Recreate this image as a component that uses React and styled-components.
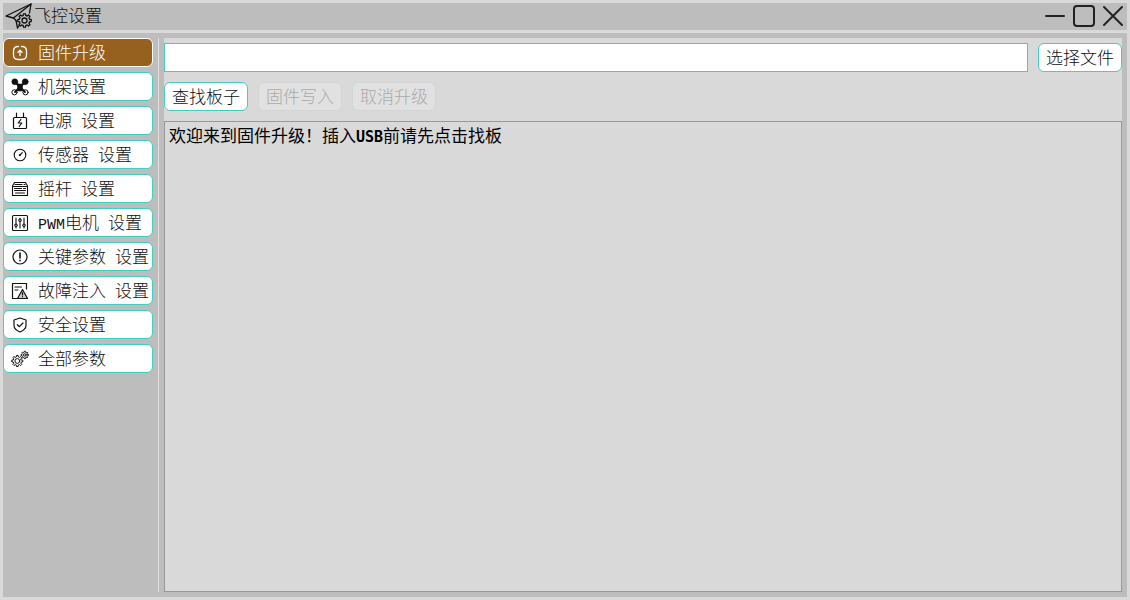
import { useState } from "react";
import styled, { createGlobalStyle, css } from "styled-components";

const stroke = {
  fill: "none",
  stroke: "currentColor",
  strokeLinecap: "round",
  strokeLinejoin: "round",
};

// outline of a toothed wheel around (cx, cy)
const gearPath = (cx, cy, outer, inner, teeth = 8) => {
  const points = [];
  const step = (Math.PI * 2) / teeth;
  for (let i = 0; i < teeth; i++) {
    const a = i * step;
    [
      [inner, -0.3],
      [outer, -0.19],
      [outer, 0.19],
      [inner, 0.3],
    ].forEach(([r, k]) => {
      const x = cx + r * Math.cos(a + k * step);
      const y = cy + r * Math.sin(a + k * step);
      points.push(`${x.toFixed(2)} ${y.toFixed(2)}`);
    });
  }
  return `M${points.join("L")}Z`;
};

const LogoIcon = () => (
  <svg width="28" height="26" viewBox="0 0 28 26" {...stroke} strokeWidth="1.3">
    <path d="M11 17.5L8.5 15L1 13L26 1L24.5 10" />
    <path d="M26 1L8.5 15M11 17.5L12.5 25L14.5 22" />
    <path d={gearPath(19.5, 17.5, 6.8, 5.2)} />
    <circle cx="19.5" cy="17.5" r="2.5" />
  </svg>
);

const UpgradeIcon = () => (
  <svg width="18" height="18" viewBox="0 0 18 18" {...stroke} strokeWidth="1.3">
    <path d="M7.5 2.5H7Q2.5 2.5 2.5 7V11Q2.5 15.5 7 15.5H11Q15.5 15.5 15.5 11V7Q15.5 2.5 11 2.5H10.5" />
    <path d="M9 11.5V6.5M7 8.3L9 6.3L11 8.3" />
  </svg>
);

const DroneIcon = () => (
  <svg width="18" height="18" viewBox="0 0 18 18" {...stroke} strokeWidth="1.8">
    <path d="M4 4L14 14M14 4L4 14" />
    <circle cx="3.8" cy="3.8" r="3" fill="currentColor" strokeWidth="0.5" />
    <circle cx="14.2" cy="3.8" r="3" fill="currentColor" strokeWidth="0.5" />
    <circle cx="3.5" cy="14.3" r="2.6" strokeWidth="1" />
    <circle cx="14.5" cy="14.3" r="2.6" strokeWidth="1" />
    <rect x="6.5" y="6" width="5" height="7" rx="1" fill="currentColor" strokeWidth="0.5" />
  </svg>
);

const PowerIcon = () => (
  <svg width="18" height="18" viewBox="0 0 18 18" {...stroke} strokeWidth="1.2">
    <rect x="2.5" y="5.5" width="13" height="11" rx="1" />
    <path d="M5.5 5V1M12.5 5V1M9.8 7.5L7.2 11H10.8L8.2 14.5" />
  </svg>
);

const SensorIcon = () => (
  <svg width="18" height="18" viewBox="0 0 18 18" {...stroke} strokeWidth="1.1">
    <circle cx="9" cy="9" r="5.8" />
    <circle cx="8.9" cy="9.1" r="0.6" />
    <path d="M9.5 8.5L11.3 6.7" />
  </svg>
);

const StickIcon = () => (
  <svg width="18" height="18" viewBox="0 0 18 18" {...stroke} strokeWidth="1.1">
    <path d="M3.5 2.5H14.5L16.5 6V15.5H1.5V6ZM1.5 6.5H16.5M4 4.5H11M13 4.5H14" />
    <path d="M3.5 8.5H10.5M12.5 8.5H14.5M3.5 10.5H14.5M4.5 13H13.5" />
  </svg>
);

const MotorIcon = () => (
  <svg width="18" height="18" viewBox="0 0 18 18" {...stroke} strokeWidth="1.1">
    <rect x="1.5" y="1.5" width="15" height="15" rx="1" />
    <path d="M5 4V10M5 12.5V14M9 4V5M9 7.5V14M13 4V10M13 12.5V14" />
    <circle cx="5" cy="11.2" r="1.2" />
    <circle cx="9" cy="6.2" r="1.2" />
    <circle cx="13" cy="11.2" r="1.2" />
  </svg>
);

const KeyParamIcon = () => (
  <svg width="18" height="18" viewBox="0 0 18 18" {...stroke} strokeWidth="1.2">
    <circle cx="9" cy="9" r="7" />
    <path d="M9 5V10M9 12.4V12.8" strokeWidth="1.6" />
  </svg>
);

const FaultIcon = () => (
  <svg width="18" height="18" viewBox="0 0 18 18" {...stroke} strokeWidth="1.2">
    <path d="M6 16.5H1.5V1.5H15.5V7M4 5H10.5M4 8H7" />
    <path d="M11.5 7.5L16.5 16.5H6.5ZM11.5 10.5V13M11.5 14.7V14.8" fill="#ccc" />
  </svg>
);

const SafetyIcon = () => (
  <svg width="18" height="18" viewBox="0 0 18 18" {...stroke} strokeWidth="1.2">
    <path d="M9 2L15 4V9.5Q15 13.5 9 16Q3 13.5 3 9.5V4Z" />
    <path d="M6.3 8.7L8.4 10.7L12 7" />
  </svg>
);

const AllParamIcon = () => (
  <svg width="18" height="18" viewBox="0 0 18 18" {...stroke} strokeWidth="1">
    <path d={gearPath(6.3, 11, 5.6, 4.2)} />
    <circle cx="6.3" cy="11" r="2.4" />
    <path d={gearPath(13.8, 5, 3.7, 2.8)} />
    <circle cx="13.8" cy="5" r="1.3" />
  </svg>
);

const menus = [
  { id: "firmware", icon: UpgradeIcon, text: "固件升级" },
  { id: "frame", icon: DroneIcon, text: "机架设置" },
  { id: "power", icon: PowerIcon, text: "电源 设置" },
  { id: "sensor", icon: SensorIcon, text: "传感器 设置" },
  { id: "stick", icon: StickIcon, text: "摇杆 设置" },
  { id: "motor", icon: MotorIcon, text: "PWM电机 设置" },
  { id: "key", icon: KeyParamIcon, text: "关键参数 设置" },
  { id: "fault", icon: FaultIcon, text: "故障注入 设置" },
  { id: "safety", icon: SafetyIcon, text: "安全设置" },
  { id: "all", icon: AllParamIcon, text: "全部参数" },
];

// latin letters and spaces are half as wide as a chinese character
const MixedText = ({ children, bold }) =>
  children.split(/([A-Z ]+)/).map((part, idx) =>
    /^[A-Z ]+$/.test(part) ? (
      <Latin key={idx} $bold={bold}>
        {part}
      </Latin>
    ) : (
      part
    )
  );

const App = () => {
  const [active, setActive] = useState("firmware");
  const [file, setFile] = useState("");

  return (
    <>
      <GlobalStyle />
      <Window>
        <TitleBar>
          <LogoIcon />
          <Title>飞控设置</Title>
          <WindowButton aria-label="最小化">
            <svg width="22" height="22" viewBox="0 0 22 22" {...stroke} strokeWidth="2">
              <path d="M2 11H20" />
            </svg>
          </WindowButton>
          <WindowButton aria-label="最大化">
            <svg width="22" height="22" viewBox="0 0 22 22" {...stroke} strokeWidth="2">
              <rect x="1" y="1" width="20" height="20" rx="3" />
            </svg>
          </WindowButton>
          <WindowButton aria-label="关闭">
            <svg width="22" height="22" viewBox="0 0 22 22" {...stroke} strokeWidth="2">
              <path d="M2 2L20 20M20 2L2 20" />
            </svg>
          </WindowButton>
        </TitleBar>
        <Body>
          <Sidebar>
            {menus.map(({ id, icon: Icon, text }) => (
              <MenuButton key={id} $active={id === active} onClick={() => setActive(id)}>
                <Icon />
                <MenuText>
                  <MixedText>{text}</MixedText>
                </MenuText>
              </MenuButton>
            ))}
          </Sidebar>
          <Splitter />
          <Panel>
            <FileRow>
              <FileInput
                aria-label="固件文件"
                value={file}
                onChange={(e) => setFile(e.target.value)}
              />
              <ActionButton>选择文件</ActionButton>
            </FileRow>
            <ActionRow>
              <ActionButton>查找板子</ActionButton>
              <ActionButton disabled>固件写入</ActionButton>
              <ActionButton disabled>取消升级</ActionButton>
            </ActionRow>
            <Log role="log">
              <MixedText bold>欢迎来到固件升级！插入USB前请先点击找板</MixedText>
            </Log>
          </Panel>
        </Body>
      </Window>
    </>
  );
};

export default App;

const GlobalStyle = createGlobalStyle`
  * {
    box-sizing: border-box;
  }
  body {
    margin: 0;
  }
  body, button, input {
    font-family: "Noto Sans CJK SC", sans-serif;
    font-size: 17px;
    font-weight: 300;
    line-height: 24px;
    color: #111;
  }
`;

const Window = styled.div`
  display: flex;
  flex-direction: column;
  gap: 3px;
  min-height: 100vh;
  padding: 3px;
  background-color: #d9d9d9;
`;

const TitleBar = styled.header`
  display: flex;
  align-items: center;
  gap: 7px;
  height: 27px;
  padding: 0 3px 1px 2px;
  background-color: #bdbdbd;
`;

const Title = styled.h1`
  flex: 1;
  margin: 0 0 0 -6px;
  padding-bottom: 2px;
  font-size: 17px;
  font-weight: 300;
`;

const WindowButton = styled.button`
  display: flex;
  padding: 0;
  border: none;
  background: none;
  color: #222;
`;

const Body = styled.div`
  flex: 1;
  display: flex;
  padding: 5px 5px 5px 0;
  background-color: #bdbdbd;
`;

const Sidebar = styled.nav`
  display: flex;
  flex-direction: column;
  gap: 5px;
  width: 150px;
`;

const MenuButton = styled.button`
  display: flex;
  align-items: center;
  gap: 9px;
  height: 29px;
  padding: 0 0 0 7px;
  border: 1px solid #40d0c0;
  border-radius: 6px;
  background-color: #fff;
  white-space: nowrap;

  > svg {
    flex-shrink: 0;
  }

  ${({ $active }) =>
    $active &&
    css`
      border-color: #fff;
      background-color: #96601e;
      color: #fff;
    `}
`;

const MenuText = styled.span`
  padding-bottom: 2px;
`;

const Latin = styled.span`
  font-family: ${({ $bold }) => ($bold ? '"DejaVu Sans Mono"' : '"Liberation Mono"')}, monospace;
  font-size: 15px;
  font-weight: ${({ $bold }) => ($bold ? 700 : 400)};
  line-height: 1;
  white-space: pre;
`;

const Splitter = styled.div`
  width: 1px;
  margin: 0 5px;
  background-color: #e0e0e0;
`;

const Panel = styled.main`
  flex: 1;
  display: flex;
  flex-direction: column;
  gap: 10px;
  min-width: 0;
  padding-top: 5px;
  background-color: #d9d9d9;
`;

const FileRow = styled.div`
  display: flex;
  gap: 10px;
`;

const FileInput = styled.input`
  flex: 1;
  min-width: 0;
  height: 29px;
  padding: 0 4px;
  border: 1px solid #40d0c0;
  background-color: #fff;
  outline: none;
`;

const ActionRow = styled.div`
  display: flex;
  gap: 10px;
`;

const ActionButton = styled.button`
  width: 84px;
  height: 29px;
  padding: 0 0 2px;
  border: 1px solid #40d0c0;
  border-radius: 6px;
  background-color: #fff;
  white-space: nowrap;

  &:disabled {
    border-color: #d4d4d4;
    background-color: #e1e1e1;
    color: #aaa;
  }
`;

const Log = styled.div`
  flex: 1;
  padding: 1px 4px;
  border: 1px solid #999;
  color: #000;
  font-weight: 400;
`;
